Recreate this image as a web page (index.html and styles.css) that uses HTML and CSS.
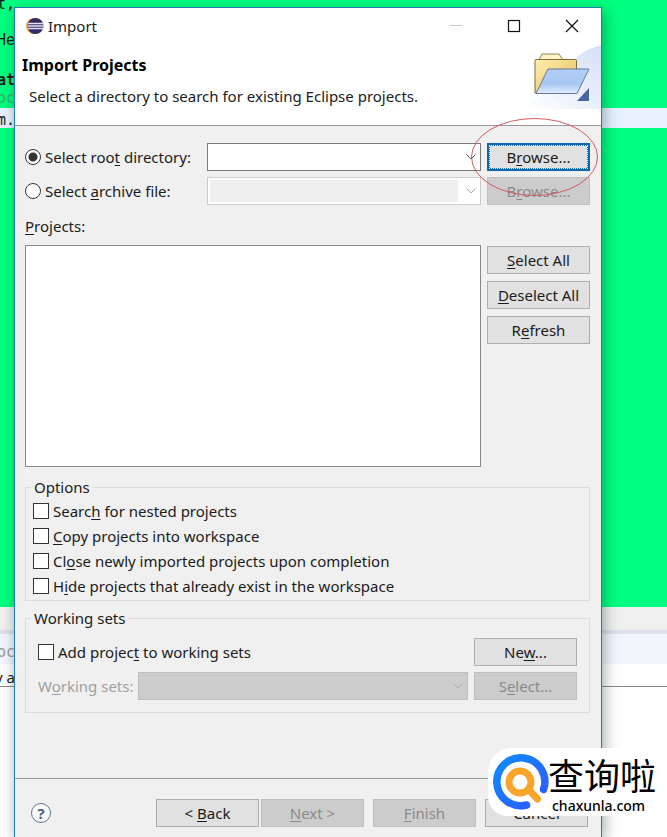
FILE: index.html
```html
<!DOCTYPE html>
<html lang="en">
<head>
<meta charset="utf-8">
<title>Import</title>
<link rel="stylesheet" href="styles.css">
</head>
<body>
<div class="editor" aria-hidden="true">
  <div class="code">
    <div class="line"><span>t,</span></div>
    <div class="line"></div>
    <div class="line"><span>He</span></div>
    <div class="line"></div>
    <div class="line keyword"><span>at</span></div>
    <div class="line comment"><span>oc</span></div>
    <div class="line current"><span>m.</span></div>
  </div>
  <div class="sash"></div>
  <div class="tabs"><span>oc</span></div>
  <div class="status"><span>y a</span></div>
</div>

<main class="dialog">
  <header class="titlebar">
    <svg class="app-icon" viewBox="0 0 18 18" width="18" height="18">
      <circle cx="8" cy="9" r="8" fill="#f0a040"/>
      <circle cx="9.500" cy="9" r="8" fill="#332c66"/>
      <path d="M2 6.500h15M1.500 9h16M2 11.500h15" stroke="#e4e2f0" stroke-width="1.300"/>
    </svg>
    <span class="title">Import</span>
    <button class="win minimize" aria-label="Minimize" disabled><svg viewBox="0 0 14 14" width="14" height="14"><path d="M1 6.500h12" stroke="#c8c8c8"/></svg></button>
    <button class="win" aria-label="Maximize"><svg viewBox="0 0 14 14" width="14" height="14"><rect x="1.500" y="1.500" width="11" height="11" fill="none" stroke="#111" stroke-width="1.200"/></svg></button>
    <button class="win" aria-label="Close"><svg viewBox="0 0 14 14" width="14" height="14"><path d="M1 1l12 12M13 1L1 13" stroke="#111" stroke-width="1.200"/></svg></button>
  </header>

  <section class="banner">
    <div class="banner-text">
      <h1>Import Projects</h1>
      <p>Select a directory to search for existing Eclipse projects.</p>
    </div>
    <svg class="folder" viewBox="0 0 73 65" width="73" height="65">
      <defs>
        <linearGradient id="sky" x1="0" y1="1" x2="1" y2="0"><stop offset="0" stop-color="#fff"/><stop offset="1" stop-color="#d3e0f6"/></linearGradient>
        <linearGradient id="back" x1="0" y1="0" x2="1" y2="1"><stop offset="0" stop-color="#fff0b0"/><stop offset="1" stop-color="#e5b852"/></linearGradient>
        <linearGradient id="front" x1="0" y1="0" x2="0" y2="1"><stop offset="0" stop-color="#b3cff8"/><stop offset=".6" stop-color="#a8c7f3"/><stop offset="1" stop-color="#e0edff"/></linearGradient>
      </defs>
      <path d="M0 65V56Q36 46 43 18Q55 6 73 1V65z" fill="url(#sky)"/>
      <path d="M11 16l3-6h17l4 6" fill="#fff3c7" stroke="#94825a"/>
      <path d="M7 16.500q0-1 1-1h39.500q1 0 1 1V49H7z" fill="url(#back)" stroke="#806d3c"/>
      <path d="M20 25h41L49 49.500H8z" fill="url(#front)" stroke="#667999"/>
      <path d="M49 57L61 44V57z" fill="#47659f"/>
    </svg>
  </section>

  <form class="content">
    <div class="source">
      <input type="radio" name="source" id="root" checked>
      <label for="root">Select roo<u>t</u> directory:</label>
      <span class="combo"><select aria-label="Root directory"><option></option></select><svg viewBox="0 0 10 6" width="10" height="6"><path d="M.500.500L5 5l4.500-4.500"/></svg></span>
      <span class="annotated">
        <button type="button" class="btn focused">B<u>r</u>owse...</button>
        <svg class="mark" viewBox="0 0 127 78" width="127" height="78"><ellipse cx="63.500" cy="39" rx="63" ry="38.500"/></svg>
      </span>
      <input type="radio" name="source" id="archive">
      <label for="archive">Select <u>a</u>rchive file:</label>
      <span class="combo off"><select aria-label="Archive file" disabled><option></option></select><svg viewBox="0 0 10 6" width="10" height="6"><path d="M.500.500L5 5l4.500-4.500"/></svg></span>
      <button type="button" class="btn" disabled>B<u>r</u>owse...</button>
    </div>

    <label class="list-label" for="projects"><u>P</u>rojects:</label>
    <div class="projects">
      <select id="projects" class="list" size="8" multiple></select>
      <div class="stack">
        <button type="button" class="btn"><u>S</u>elect All</button>
        <button type="button" class="btn"><u>D</u>eselect All</button>
        <button type="button" class="btn">R<u>e</u>fresh</button>
      </div>
    </div>

    <fieldset class="options">
      <legend>Options</legend>
      <label><input type="checkbox"><span>Searc<u>h</u> for nested projects</span></label>
      <label><input type="checkbox"><span><u>C</u>opy projects into workspace</span></label>
      <label><input type="checkbox"><span>Cl<u>o</u>se newly imported projects upon completion</span></label>
      <label><input type="checkbox"><span>H<u>i</u>de projects that already exist in the workspace</span></label>
    </fieldset>

    <fieldset class="sets">
      <legend>Working sets</legend>
      <div class="row">
        <label><input type="checkbox"><span>Add projec<u>t</u> to working sets</span></label>
        <button type="button" class="btn">Ne<u>w</u>...</button>
      </div>
      <div class="row">
        <label class="dim" for="set"><span>W<u>o</u>rking sets:</span></label>
        <span class="combo filled"><select id="set" disabled><option></option></select><svg viewBox="0 0 10 6" width="10" height="6"><path d="M.500.500L5 5l4.500-4.500"/></svg></span>
        <button type="button" class="btn" disabled>S<u>e</u>lect...</button>
      </div>
    </fieldset>
  </form>

  <footer class="actions">
    <button class="help" aria-label="Help">?</button>
    <div class="pair">
      <button class="btn">&lt; <u>B</u>ack</button>
      <button class="btn" disabled><u>N</u>ext &gt;</button>
    </div>
    <button class="btn" disabled><u>F</u>inish</button>
    <button class="btn cancel">Cancel</button>
  </footer>
</main>

<div class="watermark">
  <svg viewBox="0 0 60 60" width="60" height="60">
    <defs><linearGradient id="ring" x1="0" y1="0" x2="1" y2="1"><stop offset="0" stop-color="#0d8cff"/><stop offset="1" stop-color="#3157ff"/></linearGradient></defs>
    <path d="M52.500 37.500A24 24 0 1 0 35.500 53" fill="none" stroke="url(#ring)" stroke-width="7.500" stroke-linecap="round"/>
    <circle cx="29" cy="30" r="11" fill="none" stroke="#f9a42b" stroke-width="7"/>
    <path d="M38 38l8.500 9" stroke="#f9a42b" stroke-width="7" stroke-linecap="round"/>
  </svg>
  <div class="brand"><span class="name" lang="zh">查询啦</span><span class="domain">chaxunla.com</span></div>
</div>
</body>
</html>
```
FILE: styles.css
```css
* { box-sizing: border-box; }

body {
  margin: 0;
  height: 100vh;
  overflow: hidden;
  position: relative;
  display: flex;
  padding: 7px 65px 0 14px;
  font: 15px/20px "Noto Sans", "Open Sans", sans-serif;
  color: #1b1b1b;
  background: #fff;
}

button, select, input { font: inherit; color: inherit; margin: 0; }
u { text-underline-offset: 2px; }

/* Editor behind the dialog */
.editor { position: absolute; inset: 0; display: flex; flex-direction: column; font-family: "DejaVu Sans Mono", monospace; }
.code { height: 607px; background: #00ff80; }
.line { height: 20px; line-height: 24px; }
.line:first-child { height: 8px; line-height: 8px; }
.line span, .tabs span, .status span { display: flex; justify-content: flex-end; width: 15px; white-space: nowrap; }
.line.keyword { font-weight: bold; }
.line.comment { color: #35b56c; line-height: 20px; }
.line.current { background: #e8f2fe; }
.sash { height: 27px; background: #f0f0f0; border-bottom: 4px solid #dedfea; }
.tabs { height: 30px; background: #f3f5fd; color: #999; line-height: 36px; }
.status { height: 23px; border-bottom: 1px solid #8c8c8c; }
.status span { line-height: 26px; font-family: "Noto Sans", sans-serif; }

/* Dialog */
.dialog {
  position: relative;
  flex: 1;
  display: flex;
  flex-direction: column;
  background: #f0f0f0;
  border: 1px solid #1f7fa8;
  border-bottom: 0;
  box-shadow: 2px 4px 14px rgba(0, 40, 40, .4);
}

.titlebar { display: flex; align-items: center; height: 37px; padding-left: 11px; background: #fff; }
.title { flex: 1; padding-left: 4px; }
.win { width: 58px; height: 36px; padding: 0; border: 0; background: none; display: grid; place-items: center; }

.banner { display: flex; justify-content: space-between; height: 82px; background: #fff; border-bottom: 1px solid #999; }
.banner-text { padding: 11px 0 0 7px; }
.banner h1 { margin: 0 0 11px; font-size: 16px; line-height: 20px; color: #000; }
.banner p { margin: 0 0 0 7px; }

.content { padding: 17px 11px 0 10px; }

.btn {
  width: 103px;
  height: 28px;
  padding: 0;
  border: 1px solid #adadad;
  background: #e1e1e1;
}
.btn:disabled { background: #ccc; border-color: #bfbfbf; color: #8a8a8a; }
.btn.focused { border: 3px solid #0f66ad; outline: 1px dotted #fff; outline-offset: -3px; }

.source { display: grid; grid-template-columns: 16px auto 1fr 103px; align-items: center; row-gap: 6px; }
.source label { padding: 0 16px 0 4px; }

input[type="radio"], input[type="checkbox"] {
  appearance: none;
  flex: none;
  width: 16px;
  height: 16px;
  border: 1px solid #333;
  background: #fff;
}
input[type="radio"] { border-radius: 50%; }
input[type="radio"]:checked { background: radial-gradient(circle, #333 4px, #fff 5px); }

.combo { position: relative; display: flex; margin-right: 6px; }
.combo select { appearance: none; width: 100%; height: 28px; border: 1px solid #7a7a7a; border-radius: 0; background: #fff; }
.combo svg { position: absolute; right: 5px; top: 11px; fill: none; stroke: #555; pointer-events: none; }
.combo.off select { border-color: #ccc; background: linear-gradient(#efefef, #efefef) 2px 2px / calc(100% - 24px) calc(100% - 4px) no-repeat #fff; opacity: 1; }
.combo.off svg, .combo.filled svg { stroke: #aaa; }
.combo.filled { flex: 1; }
.combo.filled select { border-color: #bfbfbf; background: #ccc; opacity: 1; }

.annotated { position: relative; display: flex; }
.mark { position: absolute; left: -16px; top: -25px; fill: none; stroke: #cf5b5f; pointer-events: none; z-index: 1; }

.list-label { display: block; margin: 11px 0 9px; }
.projects { display: flex; gap: 6px; }
.list { flex: 1; height: 222px; padding: 0; border: 1px solid #828790; border-radius: 0; background: #fff; }
.stack { display: flex; flex-direction: column; gap: 7px; padding-top: 1px; }

fieldset { margin: 0; padding: 0; border: 1px solid #dcdcdc; min-width: 0; }
legend { margin-left: 5px; padding: 0 3px; line-height: 20px; }
fieldset label { display: flex; align-items: center; gap: 4px; }

.options { margin-top: 10px; padding: 1px 7px 2px; }
.options legend { margin-left: -2px; }
.options label { height: 25px; }

.sets { margin-top: 7px; padding: 10px 12px 12px 12px; }
.sets legend { margin-left: -7px; }
.sets .row { display: flex; align-items: center; justify-content: space-between; }
.sets .row + .row { margin-top: 6px; }
.sets .dim { color: #a0a0a0; margin-right: 5px; }

.banner { height: 84px; }

.actions {
  display: flex;
  align-items: center;
  gap: 9px;
  margin-top: 65px;
  padding: 20px 13px 10px 16px;
  border-top: 1px solid #999;
}
.help {
  width: 20px;
  height: 20px;
  margin-right: auto;
  padding: 0;
  border: 1px solid #64748a;
  border-radius: 50%;
  background: #f7f9fb;
  color: #4d617b;
  font-weight: bold;
  line-height: 18px;
}
.pair { display: flex; gap: 2px; }

/* Site badge in the corner */
.watermark {
  position: absolute;
  right: 4px;
  bottom: 21px;
  display: flex;
  width: 175px;
  height: 68px;
  padding: 4px 0 0 3px;
  border-radius: 24px 8px 8px 20px;
  background: #fff;
  color: #000;
}
.watermark svg { flex: none; }
.brand { display: flex; flex-direction: column; margin-left: -3px; white-space: nowrap; }
.name { font: 36px/44px "Noto Sans CJK SC", sans-serif; }
.domain { padding-left: 4px; font: 500 14px/20px "Noto Sans", sans-serif; }
```
